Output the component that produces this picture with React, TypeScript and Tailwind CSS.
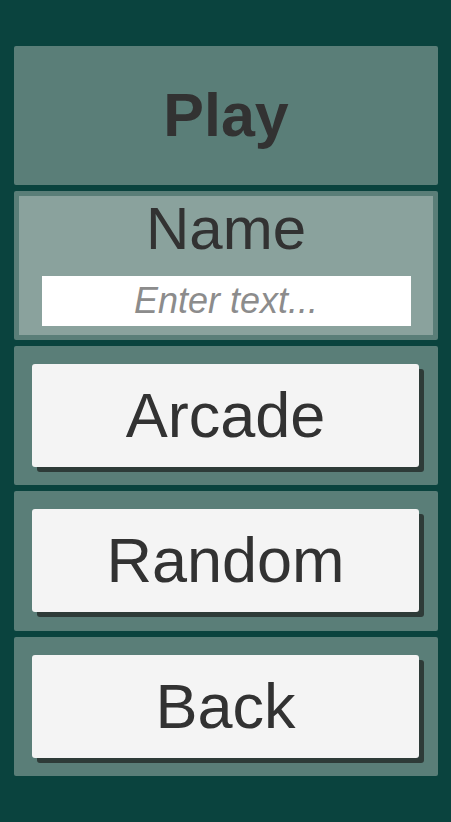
const font = { fontFamily: '"Liberation Sans", Arial, sans-serif' };

const MenuButton = ({ label, tall }: { label: string; tall?: boolean }) => (
  <div className={`${tall ? "h-[140px]" : "h-[139px]"} rounded-[2px] bg-[#5a7e78] pt-[18px] pl-[18px]`}>
    <button className="flex h-[103px] w-[387px] items-center justify-center rounded-[3px] bg-[#f4f4f4] text-[63px] leading-none text-[#323232] shadow-[5px_5px_0_0_#2e3b38]">
      {label}
    </button>
  </div>
);

export default function App() {
  return (
    <div className="min-h-[822px] w-full bg-[#0a433e] pt-[46px]" style={font}>
      <div className="ml-[14px] flex w-[424px] flex-col gap-[6px]">
        {/* Title */}
        <div className="flex h-[139px] items-center justify-center rounded-[2px] bg-[#5a7e78]">
          <h1 className="text-[61px] font-bold leading-none text-[#323232]">Play</h1>
        </div>

        {/* Name */}
        <div className="h-[149px] rounded-[2px] bg-[#5a7e78] p-[5px]">
          <div className="flex h-full flex-col items-center bg-[#8aa29d] pt-[3px]">
            <span className="text-[60px] leading-none text-[#323232]">Name</span>
            <input
              className="mt-[17px] h-[50px] w-[369px] bg-white text-center text-[36px] text-[#323232] outline-none placeholder:italic placeholder:text-[#8c8c8c]"
              placeholder="Enter text..."
            />
          </div>
        </div>

        <MenuButton label="Arcade" />
        <MenuButton label="Random" tall />
        <MenuButton label="Back" />
      </div>
    </div>
  );
}
